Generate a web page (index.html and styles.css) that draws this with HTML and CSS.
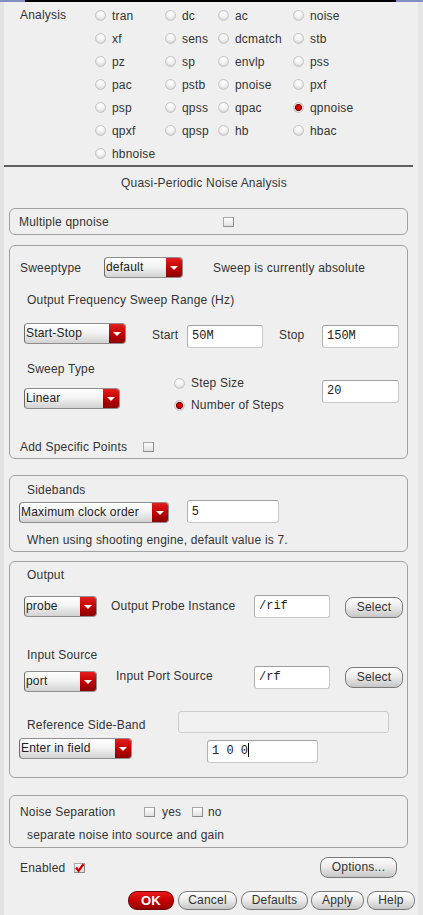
FILE: index.html
```html
<!DOCTYPE html>
<html>
<head>
<meta charset="utf-8">
<title>Quasi-Periodic Noise Analysis</title>
<link rel="stylesheet" href="styles.css">
</head>
<body>
<div class="topbar"><span class="tb-blue tb-l"></span><span class="tb-black"></span><span class="tb-blue"></span></div>
<div class="frame">
  <div class="lstrip"></div>
  <div class="main">
    <div class="analysis">
      <div class="an-label">Analysis</div>
      <div class="an-grid">
        <label class="ri"><span class="rb"></span>tran</label>
        <label class="ri"><span class="rb"></span>dc</label>
        <label class="ri"><span class="rb"></span>ac</label>
        <label class="ri"><span class="rb"></span>noise</label>
        <label class="ri"><span class="rb"></span>xf</label>
        <label class="ri"><span class="rb"></span>sens</label>
        <label class="ri"><span class="rb"></span>dcmatch</label>
        <label class="ri"><span class="rb"></span>stb</label>
        <label class="ri"><span class="rb"></span>pz</label>
        <label class="ri"><span class="rb"></span>sp</label>
        <label class="ri"><span class="rb"></span>envlp</label>
        <label class="ri"><span class="rb"></span>pss</label>
        <label class="ri"><span class="rb"></span>pac</label>
        <label class="ri"><span class="rb"></span>pstb</label>
        <label class="ri"><span class="rb"></span>pnoise</label>
        <label class="ri"><span class="rb"></span>pxf</label>
        <label class="ri"><span class="rb"></span>psp</label>
        <label class="ri"><span class="rb"></span>qpss</label>
        <label class="ri"><span class="rb"></span>qpac</label>
        <label class="ri"><span class="rb on"></span>qpnoise</label>
        <label class="ri"><span class="rb"></span>qpxf</label>
        <label class="ri"><span class="rb"></span>qpsp</label>
        <label class="ri"><span class="rb"></span>hb</label>
        <label class="ri"><span class="rb"></span>hbac</label>
        <label class="ri"><span class="rb"></span>hbnoise</label>
      </div>
    </div>
    <div class="sep"></div>
    <div class="title">Quasi-Periodic Noise Analysis</div>

    <div class="box box-multi">
      <span class="multi-label">Multiple qpnoise</span>
      <span class="cb"></span>
    </div>

    <div class="box box-sweep">
      <div class="row-a">
        <span class="sw-label">Sweeptype</span>
        <div class="combo w79"><span class="val">default</span><span class="arr"></span></div>
        <span class="sw-note">Sweep is currently absolute</span>
      </div>
      <div class="row-b">Output Frequency Sweep Range (Hz)</div>
      <div class="row-c">
        <div class="combo w102"><span class="val">Start-Stop</span><span class="arr"></span></div>
        <span class="start-label">Start</span>
        <div class="inp w76 mt2">50M</div>
        <span class="stop-label">Stop</span>
        <div class="inp w77 mt2">150M</div>
      </div>
      <div class="row-de">
        <div class="col1">
          <div class="st-label">Sweep Type</div>
          <div class="combo w96 mt11"><span class="val">Linear</span><span class="arr"></span></div>
        </div>
        <div class="col2">
          <label class="ri2"><span class="rb"></span>Step Size</label>
          <label class="ri2"><span class="rb on"></span>Number of Steps</label>
        </div>
        <div class="inp w77 mt19">20</div>
      </div>
      <div class="row-f">
        <span class="asp-label">Add Specific Points</span>
        <span class="cb"></span>
      </div>
    </div>

    <div class="box box-side">
      <div class="sub-label">Sidebands</div>
      <div class="side-row">
        <div class="combo w150"><span class="val">Maximum clock order</span><span class="arr"></span></div>
        <div class="inp w92 ml18 sans">5</div>
      </div>
      <div class="side-note">When using shooting engine, default value is 7.</div>
    </div>

    <div class="box box-out">
      <div class="sub-label pt5">Output</div>
      <div class="out-row1">
        <div class="combo w73 mt1"><span class="val">probe</span><span class="arr"></span></div>
        <span class="opi-label">Output Probe Instance</span>
        <div class="inp w76">/rif</div>
        <div class="btn sel mt2">Select</div>
      </div>
      <div class="sub-label mt29">Input Source</div>
      <div class="out-row2">
        <div class="combo w73 mt5"><span class="val">port</span><span class="arr"></span></div>
        <span class="ips-label">Input Port Source</span>
        <div class="inp w76">/rf</div>
        <div class="btn sel mt1">Select</div>
      </div>
      <div class="out-row3">
        <span class="rsb-label">Reference Side-Band</span>
        <div class="dis-field"></div>
      </div>
      <div class="out-row4">
        <div class="combo w113"><span class="val">Enter in field</span><span class="arr"></span></div>
        <div class="inp w111 mt2 ml75">1 0 0<span class="caret"></span></div>
      </div>
    </div>

    <div class="box box-noise">
      <div class="ns-row">
        <span class="ns-label">Noise Separation</span>
        <span class="cb"></span><span class="yes">yes</span>
        <span class="cb"></span><span class="no">no</span>
      </div>
      <div class="ns-note">separate noise into source and gain</div>
    </div>

    <div class="enabled-row">
      <span class="en-label">Enabled</span>
      <span class="cb cb-checked"><svg width="11" height="10" viewBox="0 0 11 10"><path d="M2 4.5 L4.6 7.8 L9.5 1" fill="none" stroke="#d40000" stroke-width="2.2"/></svg></span>
      <div class="btn opt">Options...</div>
    </div>

    <div class="bottom-row">
      <div class="btn bb ok">OK</div>
      <div class="btn bb cancel">Cancel</div>
      <div class="btn bb defaults">Defaults</div>
      <div class="btn bb apply">Apply</div>
      <div class="btn bb help">Help</div>
    </div>
  </div>
  <div class="rstrip"></div>
</div>
</body>
</html>
```

FILE: styles.css
```css
html, body {
  margin: 0;
  padding: 0;
}
body {
  width: 423px;
  height: 915px;
  overflow: hidden;
  background: #efefef;
  font-family: "Liberation Sans", Arial, sans-serif;
  font-size: 12px;
  letter-spacing: 0.2px;
  color: #333333;
}
.topbar {
  display: flex;
  height: 2px;
}
.tb-blue { background: #7f8fc0; width: 27px; }
.tb-l { width: 25px; }
.tb-black { flex: 1; background: #000; }
.frame {
  display: flex;
  height: 913px;
}
.lstrip { width: 4px; background: #e3e3e3; }
.rstrip { width: 5px; background: #e5e5e5; }
.main { flex: 1; }

/* Analysis radios */
.analysis {
  display: flex;
  padding-top: 2px;
}
.an-label {
  width: 91px;
  box-sizing: border-box;
  padding-left: 16px;
  line-height: 23px;
}
.an-grid {
  display: grid;
  grid-template-columns: 70px 53px 75px auto;
  grid-auto-rows: 23px;
}
.ri {
  display: flex;
  align-items: center;
  white-space: nowrap;
}
.rb {
  display: inline-block;
  width: 11px;
  height: 11px;
  box-sizing: border-box;
  border-radius: 50%;
  border: 1px solid #c6c6c6;
  background: radial-gradient(circle at 50% 30%, #ffffff 0%, #f2f2f2 45%, #c8c8c8 100%);
  margin-right: 6px;
  flex: none;
}
.rb.on {
  background: radial-gradient(circle at 50% 50%, #ee0000 0, #cc0000 2px, #7d0000 3.2px, #e8e8e8 3.9px, #c6c6c6 100%);
}
.sep {
  height: 2px;
  background: #5e5e5e;
  margin-right: 5px;
}
.title {
  width: 400px;
  height: 32px;
  line-height: 32px;
  text-align: center;
  color: #363636;
}

/* Group boxes */
.box {
  box-sizing: border-box;
  width: 399px;
  margin-left: 5px;
  border: 1px solid #a2a2a2;
  border-radius: 6px;
}
.box-multi {
  height: 27px;
  margin-top: 9px;
  display: flex;
  align-items: center;
  padding-left: 9px;
}
.multi-label { width: 204px; }

.cb {
  display: inline-block;
  width: 11px;
  height: 10px;
  box-sizing: border-box;
  border: 1px solid #a8a8a8;
  border-right-color: #8c8c8c;
  border-bottom-color: #8c8c8c;
  background: linear-gradient(#fdfdfd, #e0e0e0);
  flex: none;
  position: relative;
}
.cb-checked svg {
  position: absolute;
  left: -1px;
  top: -1px;
}

/* combo boxes */
.combo {
  display: flex;
  height: 21px;
  box-sizing: border-box;
  border: 1px solid #8e8e8e;
  border-left-color: #6a6a6a;
  border-radius: 4px;
  overflow: hidden;
  background: linear-gradient(#ffffff, #f3f3f3 45%, #d2d2d2);
  flex: none;
}
.combo .val {
  flex: 1;
  padding-left: 1px;
  line-height: 19px;
  white-space: nowrap;
  overflow: hidden;
  color: #222222;
}
.combo .arr {
  width: 16px;
  background: linear-gradient(#e51c1c, #bd0000 55%, #8c0000);
  display: flex;
  align-items: center;
  justify-content: center;
}
.combo .arr::before {
  content: "";
  border-left: 4px solid transparent;
  border-right: 4px solid transparent;
  border-top: 4px solid #ffffff;
}

/* text inputs */
.inp {
  box-sizing: border-box;
  height: 23px;
  background: #ffffff;
  border: 1px solid #c9c9c9;
  border-top-color: #9e9e9e;
  border-left-color: #b0b0b0;
  border-radius: 3px;
  font-family: "Liberation Mono", "Courier New", monospace;
  font-size: 12px;
  letter-spacing: 0;
  padding-left: 4px;
  line-height: 21px;
  color: #222222;
  flex: none;
  white-space: pre;
}
.inp.sans {
  font-family: "Liberation Sans", Arial, sans-serif;
}
.caret {
  display: inline-block;
  width: 1px;
  height: 14px;
  background: #000;
  vertical-align: -3px;
}

/* buttons */
.btn {
  box-sizing: border-box;
  height: 21px;
  border: 1px solid #7a7a7a;
  border-radius: 8px;
  background: linear-gradient(#fdfdfd, #ececec 45%, #c6c6c6);
  text-align: center;
  line-height: 19px;
  color: #333333;
  flex: none;
  white-space: nowrap;
}

.w73 { width: 73px; }
.w76 { width: 76px; }
.w77 { width: 77px; }
.w79 { width: 79px; }
.w92 { width: 92px; }
.w96 { width: 96px; }
.w102 { width: 102px; }
.w111 { width: 111px; }
.w113 { width: 113px; }
.w150 { width: 150px; }
.mt1 { margin-top: 1px; }
.mt2 { margin-top: 2px; }
.mt5 { margin-top: 5px; }
.mt11 { margin-top: 11px; }
.mt19 { margin-top: 19px; }
.mt29 { margin-top: 29px; }
.ml18 { margin-left: 18px; }
.ml75 { margin-left: 75px; }
.pt5 { padding-top: 5px; }

/* Sweep box */
.box-sweep {
  height: 214px;
  margin-top: 10px;
  padding-top: 11px;
}
.row-a {
  display: flex;
  align-items: center;
  height: 21px;
  padding-left: 10px;
}
.sw-label { width: 84px; }
.sw-note { margin-left: 30px; white-space: nowrap; }
.row-b {
  margin-top: 14px;
  line-height: 16px;
  padding-left: 17px;
}
.row-c {
  display: flex;
  align-items: flex-start;
  margin-top: 15px;
  padding-left: 14px;
}
.start-label {
  margin-left: 26px;
  width: 35px;
  line-height: 23px;
  margin-top: 1px;
}
.stop-label {
  margin-left: 16px;
  width: 43px;
  line-height: 23px;
  margin-top: 1px;
}
.row-de {
  display: flex;
  align-items: flex-start;
  margin-top: 13px;
  padding-left: 14px;
}
.col1 { width: 150px; }
.st-label { line-height: 16px; padding-left: 3px; }
.col2 {
  width: 148px;
  padding-top: 11px;
}
.ri2 {
  display: flex;
  align-items: center;
  height: 22px;
  white-space: nowrap;
}
.row-f {
  display: flex;
  align-items: center;
  margin-top: 23px;
  height: 16px;
  padding-left: 10px;
}
.asp-label { width: 123px; }

/* Sidebands box */
.box-side {
  height: 77px;
  margin-top: 16px;
  padding-top: 6px;
}
.sub-label {
  line-height: 16px;
  padding-left: 17px;
}
.side-row {
  display: flex;
  align-items: flex-end;
  margin-top: 2px;
  padding-left: 9px;
}
.side-note {
  margin-top: 9px;
  line-height: 16px;
  padding-left: 17px;
}

/* Output box */
.box-out {
  height: 217px;
  margin-top: 9px;
}
.out-row1, .out-row2 {
  display: flex;
  align-items: flex-start;
  padding-left: 14px;
}
.out-row1 { margin-top: 12px; }
.out-row2 { margin-top: 3px; }
.opi-label {
  margin-left: 14px;
  width: 143px;
  line-height: 23px;
  white-space: nowrap;
}
.ips-label {
  margin-left: 19px;
  width: 138px;
  line-height: 16px;
  margin-top: 2px;
  white-space: nowrap;
}
.sel {
  width: 58px;
  margin-left: 15px;
}
.out-row3 {
  display: flex;
  align-items: flex-end;
  margin-top: 19px;
  padding-left: 17px;
}
.rsb-label {
  width: 151px;
  line-height: 16px;
  white-space: nowrap;
}
.dis-field {
  width: 211px;
  height: 22px;
  box-sizing: border-box;
  border: 1px solid #cdcdcd;
  border-radius: 3px;
  background: #f1f1f1;
}
.out-row4 {
  display: flex;
  align-items: flex-start;
  margin-top: 5px;
  padding-left: 9px;
}

/* Noise separation box */
.box-noise {
  height: 53px;
  margin-top: 17px;
  padding-top: 8px;
}
.ns-row {
  display: flex;
  align-items: center;
  height: 16px;
  padding-left: 10px;
}
.ns-label { width: 124px; }
.yes { margin-left: 7px; width: 30px; }
.no { margin-left: 5px; }
.ns-note {
  margin-top: 7px;
  line-height: 16px;
  padding-left: 17px;
}

/* Enabled + options */
.enabled-row {
  display: flex;
  align-items: center;
  height: 21px;
  margin-top: 9px;
  padding-left: 16px;
}
.en-label { width: 54px; }
.opt {
  margin-left: auto;
  margin-right: 21px;
  width: 77px;
}

/* Bottom button row */
.bottom-row {
  display: flex;
  margin-top: 13px;
  padding-left: 124px;
}
.bb {
  height: 19px;
  line-height: 17px;
  border-radius: 9px;
}
.ok {
  width: 46px;
  background: linear-gradient(#ec1a1a, #c80000 50%, #950000);
  border-color: #6e0000;
  color: #ffffff;
  font-weight: bold;
  font-size: 13px;
}
.cancel { width: 59px; margin-left: 4px; }
.defaults { width: 67px; margin-left: 4px; }
.apply { width: 53px; margin-left: 3px; }
.help { width: 48px; margin-left: 3px; }
```
